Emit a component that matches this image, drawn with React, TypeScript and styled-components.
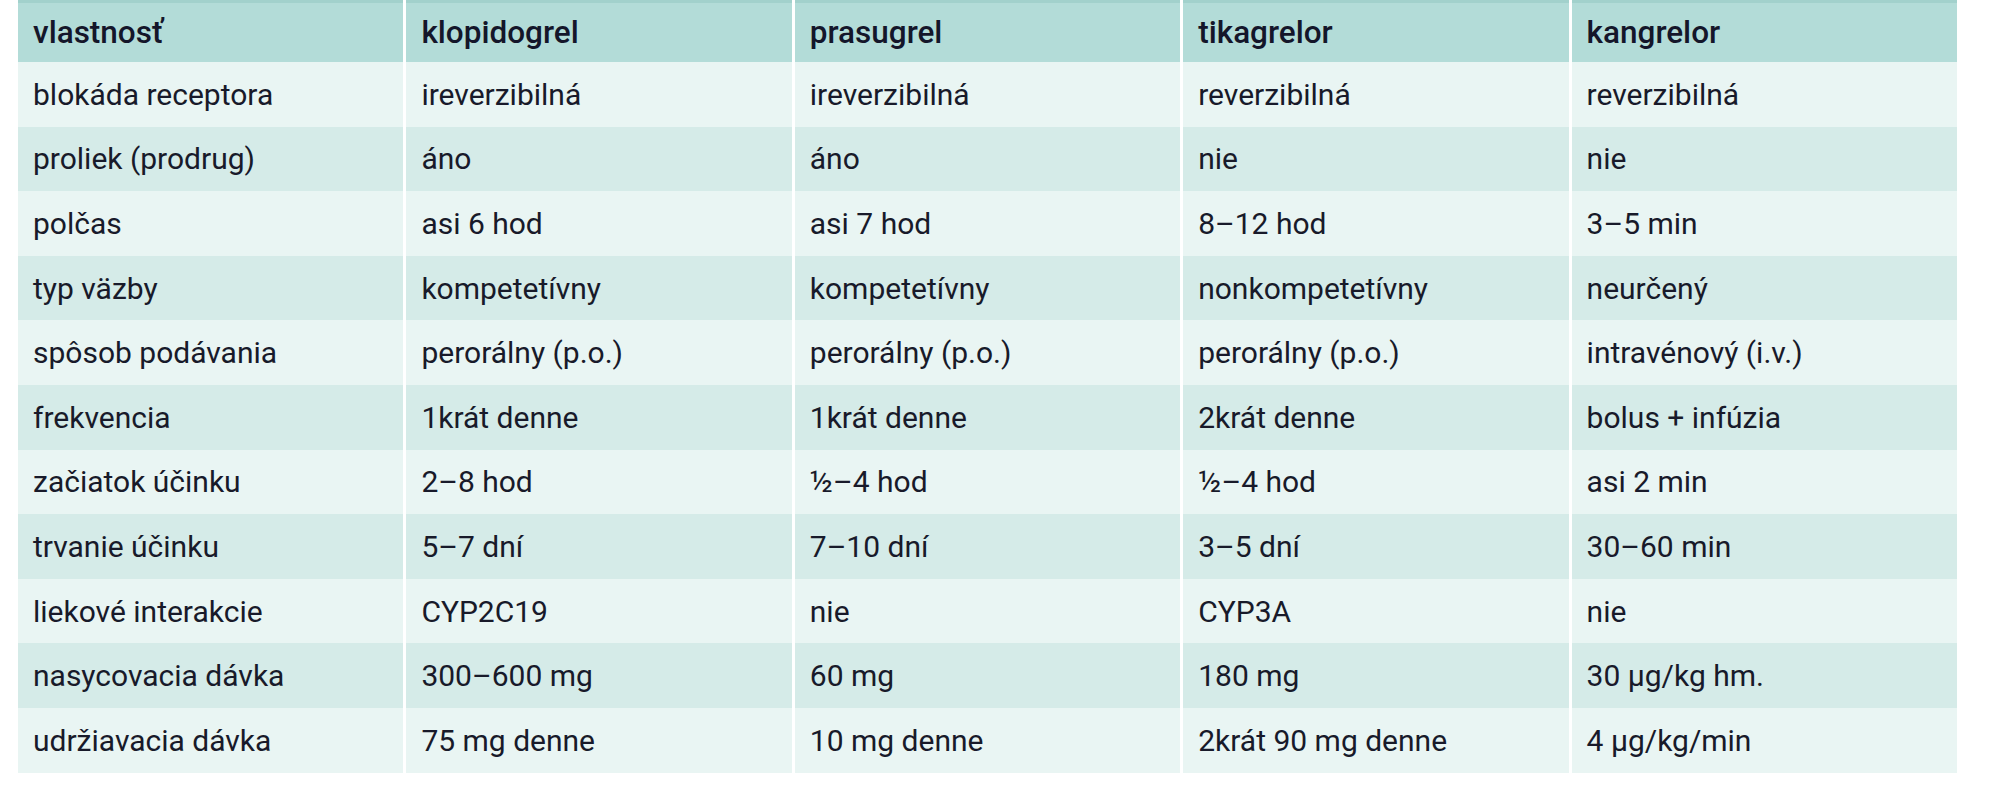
import styled, { createGlobalStyle } from "styled-components";

const GlobalStyle = createGlobalStyle`
    html, body {
        margin:0;
        padding:0;
        background:#ffffff;
    }
    body {
        font-family: Roboto, "Noto Sans", "DejaVu Sans", sans-serif;
    }
`

const Page = styled.div`
    padding:0 33px 0 18px;
`
const Table = styled.div`
    display:grid;
    grid-template-columns:repeat(5, 1fr);
    column-gap:3px;
    width:1939px;
`
const HeadCell = styled.div`
    display:flex;
    align-items:center;
    height:59px;
    padding-left:15px;
    border-top:3px solid #a2d1cc;
    background-color:#b3dcd8;
    color:#14162a;
    font-size:31.5px;
    font-weight:500;
    white-space:nowrap;
`
const Cell = styled.div<{ $dark: boolean }>`
    display:flex;
    align-items:center;
    height:64.6px;
    padding-left:15px;
    background-color:${props => (props.$dark ? "#d5ebe8" : "#e9f5f3")};
    color:#181a2a;
    font-size:30px;
    white-space:nowrap;
`

const headers = ["vlastnosť", "klopidogrel", "prasugrel", "tikagrelor", "kangrelor"];

const rows: string[][] = [
    ["blokáda receptora", "ireverzibilná", "ireverzibilná", "reverzibilná", "reverzibilná"],
    ["proliek (prodrug)", "áno", "áno", "nie", "nie"],
    ["polčas", "asi 6 hod", "asi 7 hod", "8–12 hod", "3–5 min"],
    ["typ väzby", "kompetetívny", "kompetetívny", "nonkompetetívny", "neurčený"],
    ["spôsob podávania", "perorálny (p.o.)", "perorálny (p.o.)", "perorálny (p.o.)", "intravénový (i.v.)"],
    ["frekvencia", "1krát denne", "1krát denne", "2krát denne", "bolus + infúzia"],
    ["začiatok účinku", "2–8 hod", "½–4 hod", "½–4 hod", "asi 2 min"],
    ["trvanie účinku", "5–7 dní", "7–10 dní", "3–5 dní", "30–60 min"],
    ["liekové interakcie", "CYP2C19", "nie", "CYP3A", "nie"],
    ["nasycovacia dávka", "300–600 mg", "60 mg", "180 mg", "30 μg/kg hm."],
    ["udržiavacia dávka", "75 mg denne", "10 mg denne", "2krát 90 mg denne", "4 μg/kg/min"],
];

function App() {
    return (
        <>
            <GlobalStyle />
            <Page>
                <Table>
                    {headers.map((h) => (
                        <HeadCell key={h}>{h}</HeadCell>
                    ))}
                    {rows.map((row, i) =>
                        row.map((value, j) => (
                            <Cell key={`${i}-${j}`} $dark={i % 2 === 1}>
                                {value}
                            </Cell>
                        ))
                    )}
                </Table>
            </Page>
        </>
    );
}

export default App;
